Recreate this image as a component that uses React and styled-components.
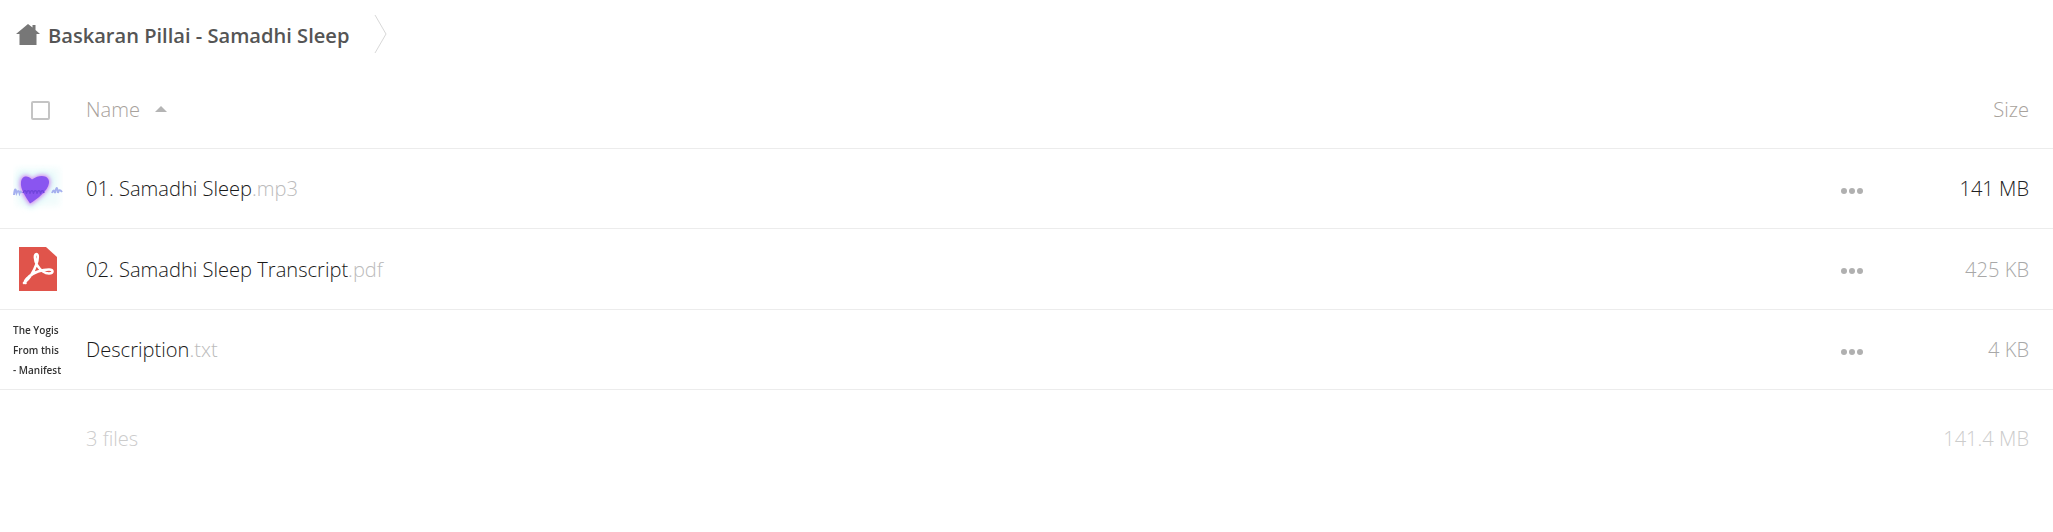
import React from 'react';
import styled, { createGlobalStyle } from 'styled-components';

const GlobalStyle = createGlobalStyle`
    html, body {
        margin: 0;
        padding: 0;
        background: #fff;
        font-family: "Open Sans", "Liberation Sans", sans-serif;
    }
`;

const Page = styled.div`
    width: 2053px;
    height: 532px;
    overflow: hidden;
`;

const Crumbs = styled.div`
    display: flex;
    align-items: center;
    height: 70px;
    padding-left: 16px;
`;

const CrumbTitle = styled.span`
    margin-left: 8px;
    font-size: 20.1px;
    font-weight: 600;
    color: #555;
`;

const CrumbArrow = styled.svg`
    margin-left: 25px;
    margin-top: -2px;
`;

const Row = styled.div`
    display: grid;
    grid-template-columns: 86px 1fr 60px 152px;
    align-items: center;
    height: ${(p) => p.$height || 80}px;
    border-bottom: ${(p) => (p.$plain ? 'none' : '1px solid #ececec')};
    box-sizing: border-box;
    font-size: 20.1px;
    font-weight: 300;
`;

const CheckCell = styled.div`
    display: flex;
    justify-content: center;
    padding-right: 5px;
    margin-top: 2px;
`;

const Checkbox = styled.span`
    display: block;
    width: 19px;
    height: 19px;
    border: 2px solid #c4c4c4;
    border-radius: 2px;
    box-sizing: border-box;
`;

const HeaderLabel = styled.span`
    color: #a8a29c;
    display: flex;
    align-items: center;
`;

const SortArrow = styled.span`
    margin-left: 15px;
    width: 0;
    height: 0;
    border-left: 6.5px solid transparent;
    border-right: 6.5px solid transparent;
    border-bottom: 6px solid #b4b4b4;
`;

const SizeCell = styled.span`
    grid-column: 4;
    text-align: right;
    padding-right: 24px;
    color: ${(p) => p.$color || '#a8a8a8'};
`;

const Thumb = styled.div`
    display: flex;
    justify-content: center;
    padding-right: 10px;
`;

const FileName = styled.span`
    color: #1a1a1a;
`;

const Ext = styled.span`
    color: #bbb;
`;

const Dots = styled.div`
    display: flex;
    justify-content: flex-start;
    gap: 2px;
    margin-top: 4px;
`;

const Dot = styled.i`
    display: block;
    width: 6px;
    height: 6px;
    border-radius: 50%;
    background: #b0b0b0;
`;

const TextThumb = styled.div`
    width: 50px;
    white-space: nowrap;
    font-size: 10px;
    font-weight: 600;
    line-height: 20px;
    color: #333;
    filter: blur(0.4px);
`;

const FooterLabel = styled.span`
    color: #ccc;
`;

const HomeIcon = () => (
    <svg width="24" height="22" viewBox="0 0 24 22">
        <path d="M12 0 L16.5 3.6 V1 H19.5 V6 L24 10 H20.5 V21 H3.5 V10 H0 Z" fill="#777" />
    </svg>
);

const HeartThumb = () => (
    <svg width="50" height="50" viewBox="0 0 50 50">
        <defs>
            <filter id="soft"><feGaussianBlur stdDeviation="0.7" /></filter>
            <filter id="glow" x="-30%" y="-30%" width="160%" height="160%"><feGaussianBlur stdDeviation="2" /></filter>
            <filter id="halo" x="-30%" y="-30%" width="160%" height="160%"><feGaussianBlur stdDeviation="3" /></filter>
        </defs>
        <rect x="3" y="4" width="44" height="38" fill="#f1fcfc" filter="url(#halo)" />
        <path d="M19 13 C15 6 4 8 4 18 C4 27 11 36 17 45 C25 38 40 29 40 18 C40 8 28 5 19 13 Z" fill="#d8f8f8" filter="url(#halo)" />
        <path d="M19 15 C15 10 8 10 7 18 C6 26 12 34 17 41 C24 36 36 28 37 19 C38 11 28 8 19 15 Z" fill="#d77cf0" filter="url(#glow)" />
        <path d="M19 15.5 C15 11 9 11 8 18 C7 25 13 33 17 39.5 C24 35 35 27 36 19 C37 12 28 9 19 15.5 Z" fill="#8a55f0" filter="url(#soft)" />
        <path d="M1 31 q1 -10 2.5 -2 q2 -4 3 0 q1 -3 2 0" stroke="#a5b0ef" strokeWidth="2" fill="none" filter="url(#soft)" />
        <path d="M10 29 q2 -5 3.5 0 q2 -5 3.5 0 q2 -5 3.5 0 q2 -5 3.5 0 q2 -5 3.5 0 q2 -5 3.5 0" stroke="#7145dc" strokeWidth="1.6" fill="none" filter="url(#soft)" />
        <path d="M39 29 q2 -5 3 0 q2 -10 3 0 q1 -5 4 -1" stroke="#a5b0ef" strokeWidth="2" fill="none" filter="url(#soft)" />
    </svg>
);

const PdfIcon = () => (
    <svg width="38" height="44" viewBox="0 0 38 44">
        <path d="M0 0 H27 L38 10 V44 H0 Z" fill="#e0544b" />
        <path d="M5 36 C10 32 15 24 17.5 17 C19 12 19.5 7 17.5 7 C15 7 15.5 13 18 18 C21 23 26 26.5 30 26.5 C35 26.5 34.5 22.5 30 22.5 C24 22.5 14 25 8.5 31 C6.5 33 5 35 6.5 36" fill="none" stroke="#fff" strokeWidth="2.5" strokeLinecap="round" />
    </svg>
);

const files = [
    { name: '01. Samadhi Sleep', ext: '.mp3', size: '141 MB', color: '#222', height: 80, thumb: <HeartThumb /> },
    { name: '02. Samadhi Sleep Transcript', ext: '.pdf', size: '425 KB', height: 81, thumb: <PdfIcon /> },
    {
        name: 'Description',
        ext: '.txt',
        size: '4 KB',
        height: 80,
        thumb: (
            <TextThumb>
                The Yogis<br />From this<br />- Manifest
            </TextThumb>
        ),
    },
];

const App = () => {
    return (
        <Page>
            <GlobalStyle />
            <Crumbs>
                <HomeIcon />
                <CrumbTitle>Baskaran Pillai - Samadhi Sleep</CrumbTitle>
                <CrumbArrow width="13" height="40" viewBox="0 0 13 40">
                    <path d="M1 1 L12 20 L1 39" fill="none" stroke="#d8d8d8" />
                </CrumbArrow>
            </Crumbs>
            <Row $height={79}>
                <CheckCell><Checkbox /></CheckCell>
                <HeaderLabel>Name<SortArrow /></HeaderLabel>
                <SizeCell $color="#a8a29c">Size</SizeCell>
            </Row>
            {files.map((f) => (
                <Row key={f.name} $height={f.height}>
                    <Thumb>{f.thumb}</Thumb>
                    <span>
                        <FileName>{f.name}</FileName>
                        <Ext>{f.ext}</Ext>
                    </span>
                    <Dots><Dot /><Dot /><Dot /></Dots>
                    <SizeCell $color={f.color}>{f.size}</SizeCell>
                </Row>
            ))}
            <Row $height={96} $plain>
                <span />
                <FooterLabel>3 files</FooterLabel>
                <SizeCell $color="#ccc">141.4 MB</SizeCell>
            </Row>
        </Page>
    );
};

export default App;
